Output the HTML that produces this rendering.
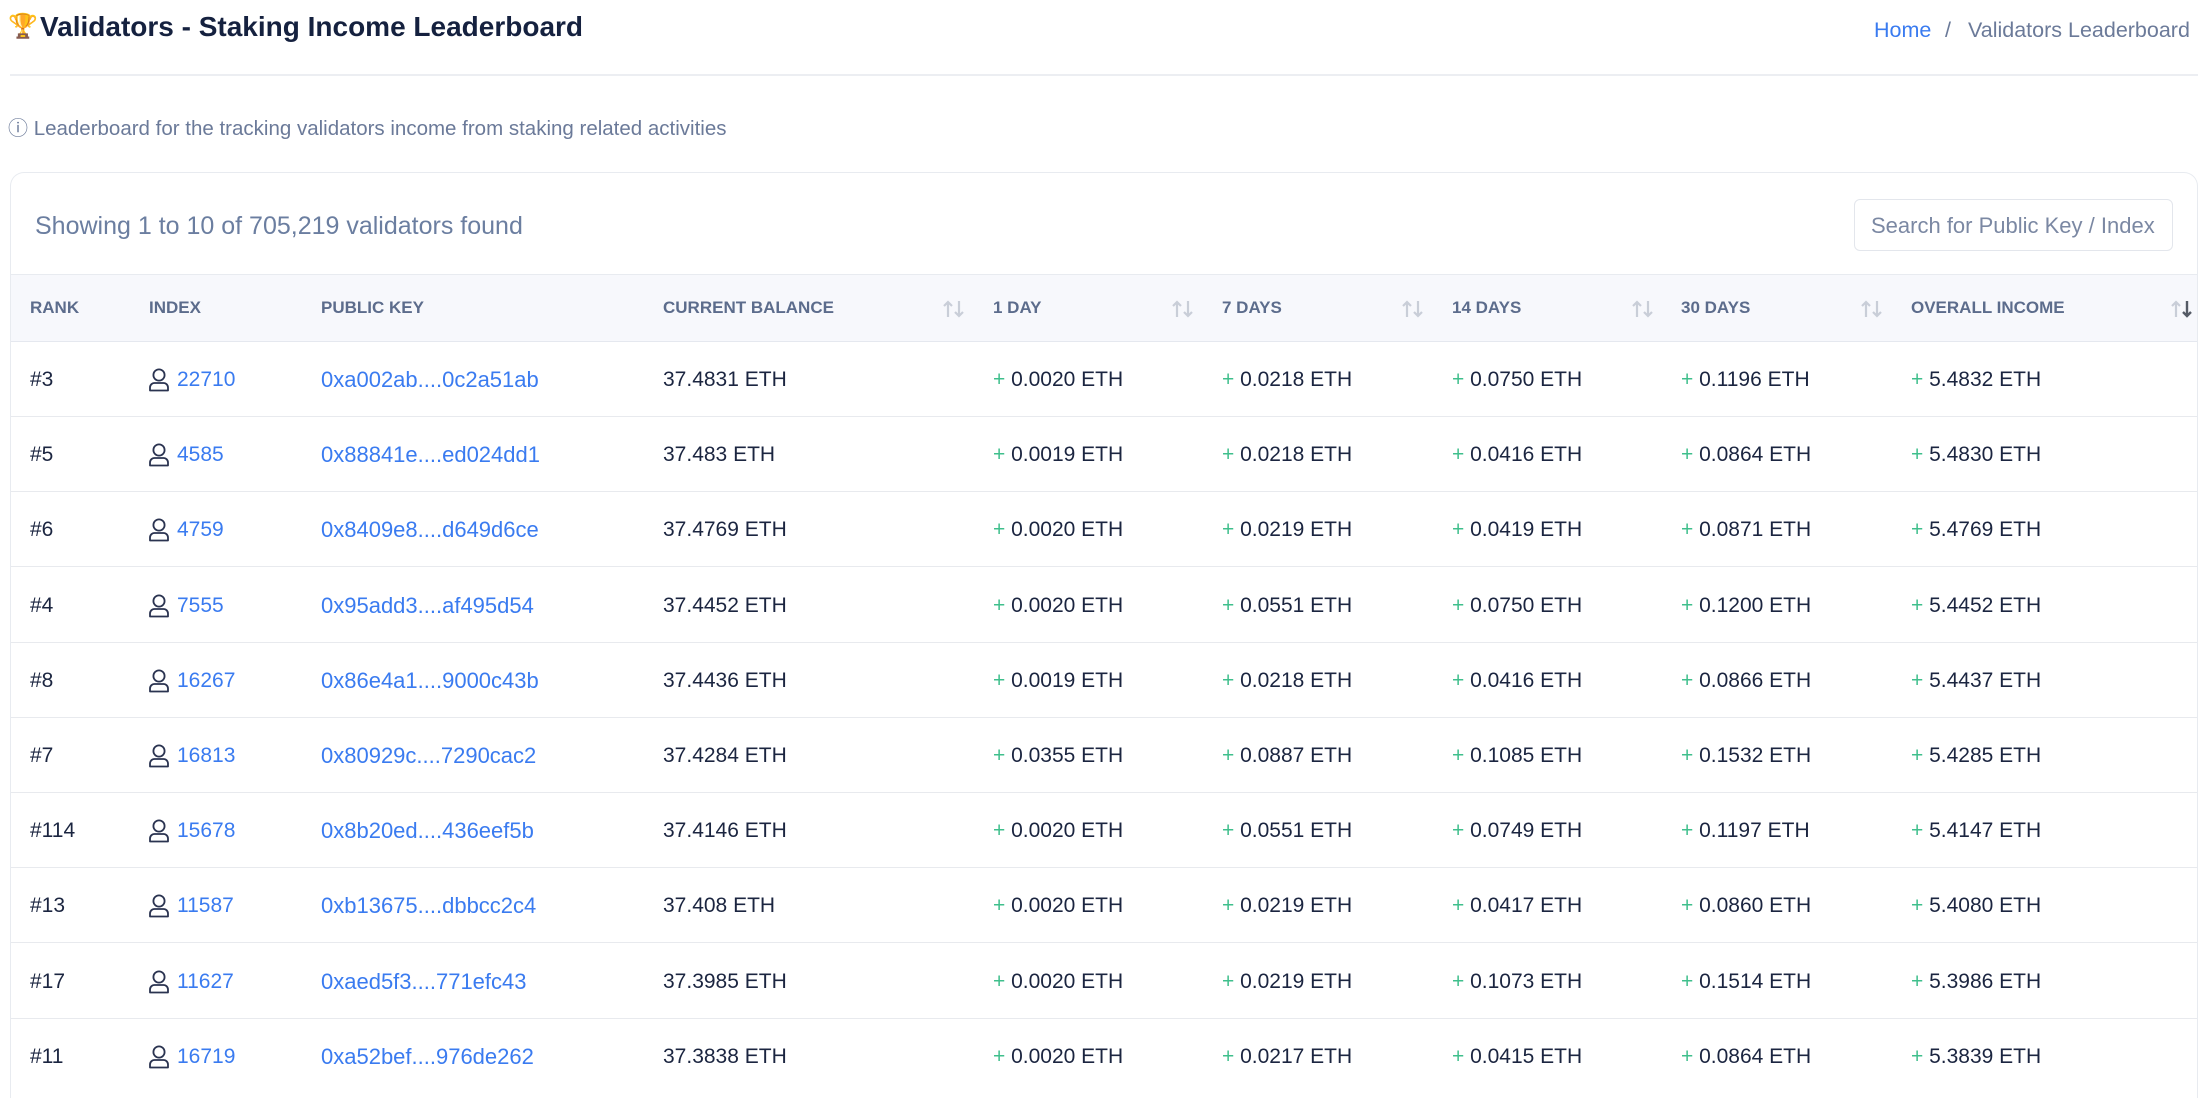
<!DOCTYPE html>
<html><head><meta charset="utf-8"><style>
*{margin:0;padding:0;box-sizing:border-box}
html{width:2208px;height:1098px;overflow:hidden}
body{width:2208px;height:1098px;overflow:hidden;background:#fff;font-family:"Liberation Sans",Arial,sans-serif;color:#1b2540;position:relative}
.abs{position:absolute;white-space:nowrap}
.title{left:40px;top:9px;font-size:28px;font-weight:bold;color:#15213f;line-height:36px}
.bc{top:16px;font-size:21.5px;line-height:28px;color:#6b7a99}
.hr{left:10px;right:10px;top:74px;height:2px;background:#eceef2}
.info{left:8px;top:116px;font-size:20.5px;color:#6b7a99;line-height:26px}
.card{left:10px;top:172px;width:2188px;height:926px;border:1.5px solid #e8ebf0;border-bottom:none;border-radius:14px 14px 0 0}
.show{left:35px;top:211px;font-size:25px;color:#6b7ea0;line-height:30px}
.search{left:1854px;top:199px;width:319px;height:52px;border:1.5px solid #e3e6ec;border-radius:6px;font-size:22px;color:#7b88a3;padding:13px 16px;overflow:hidden}
.head{left:11px;top:274px;width:2186px;height:68px;background:#f7f8fc;border-top:1.5px solid #e8ebf0;border-bottom:1.5px solid #e5e8ef}
.h{top:297px;font-size:17px;font-weight:bold;color:#5c6c8c;line-height:22px}
.row{position:absolute;left:11px;width:2186px;height:75px;border-bottom:1.5px solid #e8eaee}
.c{position:absolute;top:25px;font-size:21px;line-height:26px;white-space:nowrap}
.lk{color:#3a7bf0}
.pk{font-size:22px}
.pl{color:#3fbf8c}
.sort{top:299px}
</style></head><body>
<div class="abs" style="left:8px;top:13px;font-size:24px;line-height:28px">🏆</div>
<div class="abs title">Validators - Staking Income Leaderboard</div>
<div class="abs bc" style="left:1874px;color:#3a7bf0">Home</div>
<div class="abs bc" style="left:1945px">/</div>
<div class="abs bc" style="left:1968px">Validators Leaderboard</div>
<div class="abs hr"></div>
<div class="abs info"><span style="font-size:20px">ⓘ</span> Leaderboard for the tracking validators income from staking related activities</div>
<div class="abs card"></div>
<div class="abs show">Showing 1 to 10 of 705,219 validators found</div>
<div class="abs search">Search for Public Key / Index</div>
<div class="abs head"></div>
<div class="abs h" style="left:30px">RANK</div>
<div class="abs h" style="left:149px">INDEX</div>
<div class="abs h" style="left:321px">PUBLIC KEY</div>
<div class="abs h" style="left:663px">CURRENT BALANCE</div>
<div class="abs h" style="left:993px">1 DAY</div>
<div class="abs h" style="left:1222px">7 DAYS</div>
<div class="abs h" style="left:1452px">14 DAYS</div>
<div class="abs h" style="left:1681px">30 DAYS</div>
<div class="abs h" style="left:1911px">OVERALL INCOME</div>
<svg class="abs sort" style="left:942px" width="24" height="20" viewBox="0 0 24 20"><path d="M6 18V3M2 7l4-4 4 4M17 2v15M13 13l4 4 4-4" fill="none" stroke="#c9ced8" stroke-width="2.2"/></svg>
<svg class="abs sort" style="left:1171px" width="24" height="20" viewBox="0 0 24 20"><path d="M6 18V3M2 7l4-4 4 4M17 2v15M13 13l4 4 4-4" fill="none" stroke="#c9ced8" stroke-width="2.2"/></svg>
<svg class="abs sort" style="left:1401px" width="24" height="20" viewBox="0 0 24 20"><path d="M6 18V3M2 7l4-4 4 4M17 2v15M13 13l4 4 4-4" fill="none" stroke="#c9ced8" stroke-width="2.2"/></svg>
<svg class="abs sort" style="left:1631px" width="24" height="20" viewBox="0 0 24 20"><path d="M6 18V3M2 7l4-4 4 4M17 2v15M13 13l4 4 4-4" fill="none" stroke="#c9ced8" stroke-width="2.2"/></svg>
<svg class="abs sort" style="left:1860px" width="24" height="20" viewBox="0 0 24 20"><path d="M6 18V3M2 7l4-4 4 4M17 2v15M13 13l4 4 4-4" fill="none" stroke="#c9ced8" stroke-width="2.2"/></svg>
<svg class="abs sort" style="left:2170px" width="24" height="20" viewBox="0 0 24 20"><path d="M6 18V3M2 7l4-4 4 4" fill="none" stroke="#c9ced8" stroke-width="2.2"/><path d="M17 2v15M13 13l4 4 4-4" fill="none" stroke="#555b66" stroke-width="2.4"/></svg>
<div id="rows"></div>
<script>
const d=[
["#3","22710","0xa002ab....0c2a51ab","37.4831","0.0020","0.0218","0.0750","0.1196","5.4832"],
["#5","4585","0x88841e....ed024dd1","37.483","0.0019","0.0218","0.0416","0.0864","5.4830"],
["#6","4759","0x8409e8....d649d6ce","37.4769","0.0020","0.0219","0.0419","0.0871","5.4769"],
["#4","7555","0x95add3....af495d54","37.4452","0.0020","0.0551","0.0750","0.1200","5.4452"],
["#8","16267","0x86e4a1....9000c43b","37.4436","0.0019","0.0218","0.0416","0.0866","5.4437"],
["#7","16813","0x80929c....7290cac2","37.4284","0.0355","0.0887","0.1085","0.1532","5.4285"],
["#114","15678","0x8b20ed....436eef5b","37.4146","0.0020","0.0551","0.0749","0.1197","5.4147"],
["#13","11587","0xb13675....dbbcc2c4","37.408","0.0020","0.0219","0.0417","0.0860","5.4080"],
["#17","11627","0xaed5f3....771efc43","37.3985","0.0020","0.0219","0.1073","0.1514","5.3986"],
["#11","16719","0xa52bef....976de262","37.3838","0.0020","0.0217","0.0415","0.0864","5.3839"]];
const xs=[993,1222,1452,1681,1911];
const person='<svg width="22" height="24" viewBox="0 0 22 24" style="position:absolute;left:0;top:1px"><circle cx="11" cy="7" r="5.6" fill="none" stroke="#2a3350" stroke-width="1.8"/><path d="M2 22.5v-3a4.5 4.5 0 0 1 4.5-4.5h9a4.5 4.5 0 0 1 4.5 4.5v3z" fill="none" stroke="#2a3350" stroke-width="1.8" stroke-linejoin="round"/></svg>';
let h='';
d.forEach((r,i)=>{
 const top=342+i*75.2;
 h+=`<div class="row" style="top:${top}px;${i==9?'height:60px;border-bottom:none':''}">`;
 h+=`<div class="c" style="left:19px">${r[0]}</div>`;
 h+=`<div class="c" style="left:137px;width:200px">${person}<span class="lk" style="position:absolute;left:29px">${r[1]}</span></div>`;
 h+=`<div class="c lk pk" style="left:310px">${r[2]}</div>`;
 h+=`<div class="c" style="left:652px">${r[3]} ETH</div>`;
 for(let k=0;k<5;k++)h+=`<div class="c" style="left:${xs[k]-11}px"><span class="pl">+</span> ${r[4+k]} ETH</div>`;
 h+='</div>';
});
document.getElementById('rows').innerHTML=h;
</script>
</body></html>
